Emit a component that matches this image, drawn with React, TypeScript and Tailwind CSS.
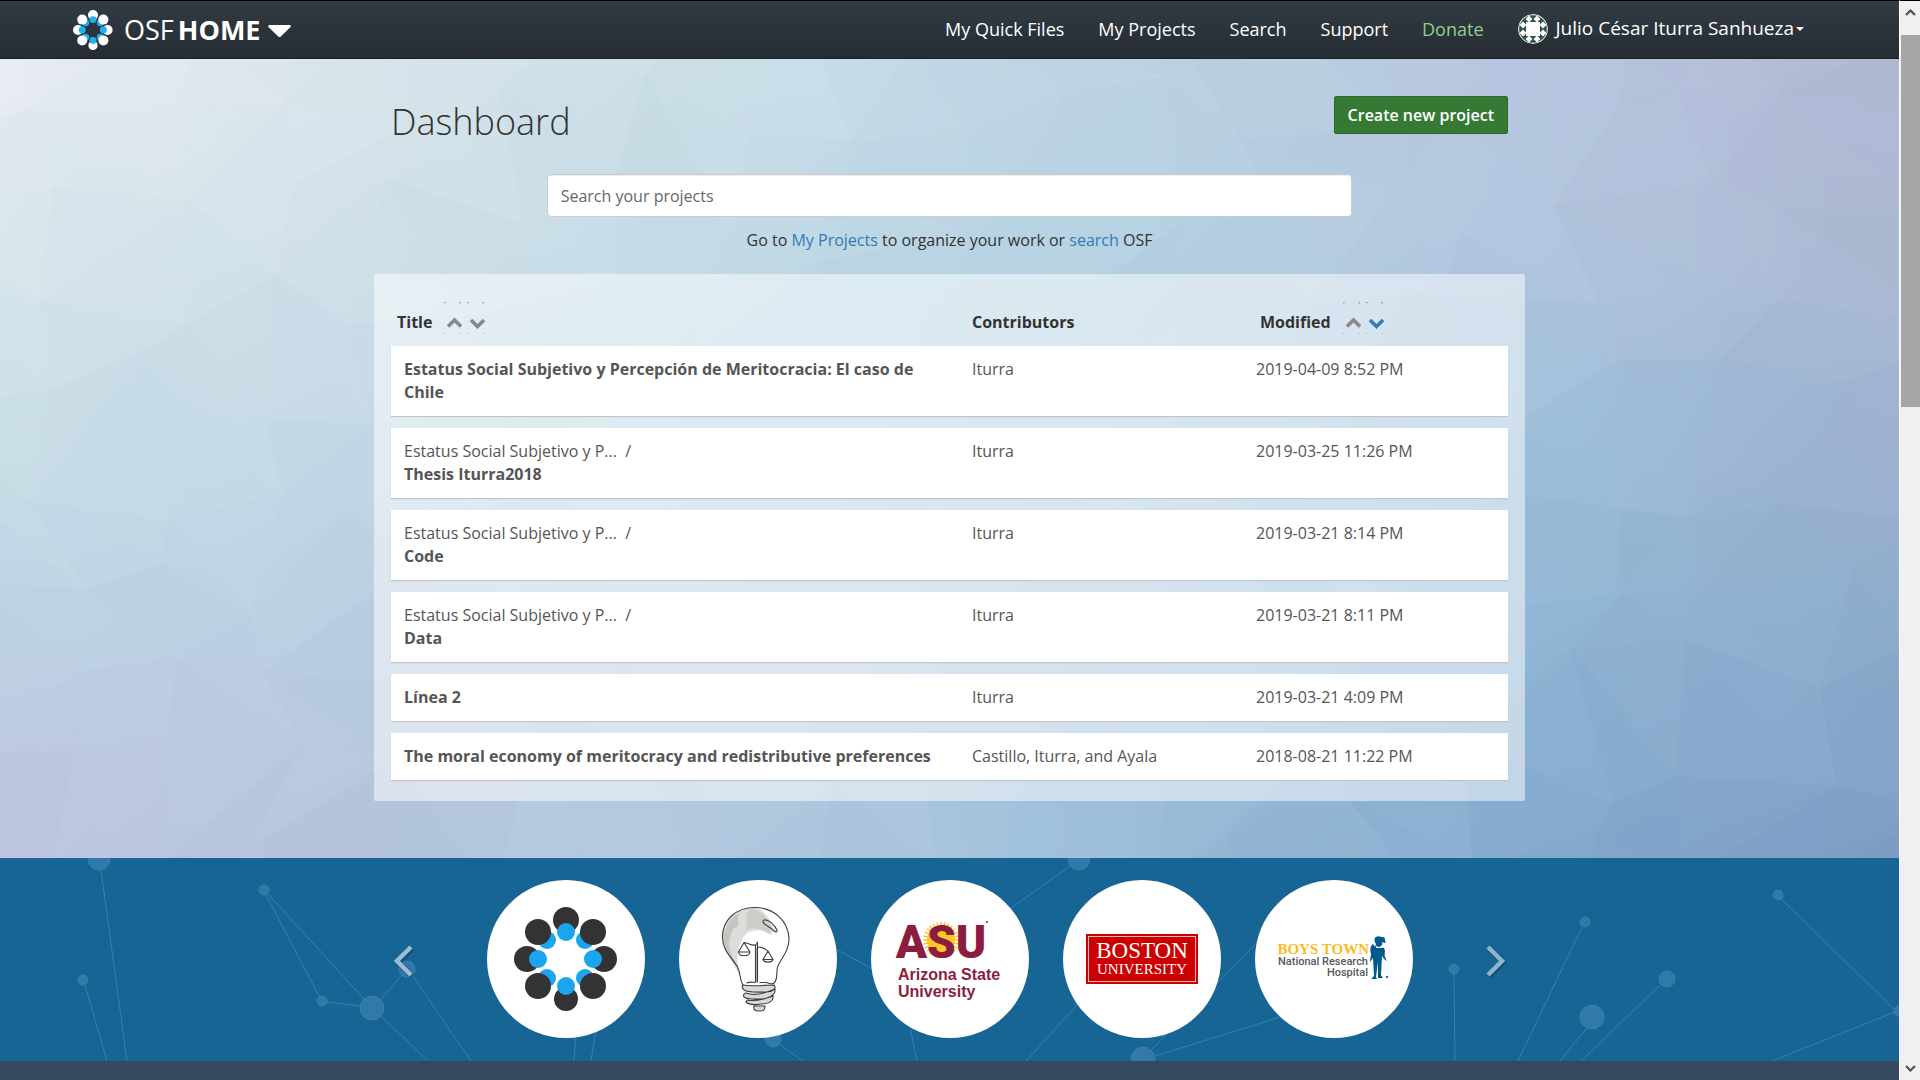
import React from "react";

type Rgb = [number, number, number];

const hex = (s: string): Rgb => [
  parseInt(s.slice(0, 2), 16),
  parseInt(s.slice(2, 4), 16),
  parseInt(s.slice(4, 6), 16),
];

// Colours the backdrop blends between, from top-left to bottom-right.
const PALETTE: Rgb[][] = [
  ["e8ecf2", "dae5ec", "cadee8", "bdd2e2", "b7c6e0", "b2b8d4"],
  ["d7e5eb", "cfdfe8", "c0d9e5", "b3d0e2", "b3c6df", "abb9d3"],
  ["c9dde7", "c2d8e6", "bbd3e3", "afcde0", "9bbed8", "9db1cf"],
  ["bed0e4", "bacce2", "b9cce0", "a8c6de", "90b6d5", "8caacb"],
  ["bdc3de", "b5c5de", "afc8df", "9cbcd9", "83a9cd", "7c9bc3"],
].map((row) => row.map(hex));

const BG_W = 1900;
const BG_H = 800;

function colourAt(x: number, y: number): Rgb {
  const u = Math.min(4.999, Math.max(0, (x / BG_W) * 5));
  const v = Math.min(3.999, Math.max(0, (y / BG_H) * 4));
  const i = Math.floor(u);
  const j = Math.floor(v);
  const fu = u - i;
  const fv = v - j;
  return [0, 1, 2].map((k) => {
    const top = PALETTE[j][i][k] * (1 - fu) + PALETTE[j][i + 1][k] * fu;
    const bottom = PALETTE[j + 1][i][k] * (1 - fu) + PALETTE[j + 1][i + 1][k] * fu;
    return top * (1 - fv) + bottom * fv;
  }) as Rgb;
}

function noise(a: number, b: number) {
  const s = Math.sin(a * 127.1 + b * 311.7) * 43758.5453;
  return s - Math.floor(s);
}

const CELL_X = 110;
const CELL_Y = 95;

function buildFacets() {
  const vertex = (i: number, j: number): [number, number] => [
    Math.round((i - 0.5 + (noise(i, j) - 0.5) * 0.75) * CELL_X),
    Math.round((j - 0.5 + (noise(j + 40, i) - 0.5) * 0.75) * CELL_Y),
  ];
  const facets: { points: string; fill: string }[] = [];
  for (let j = -2; j < 11; j++) {
    for (let i = -2; i < 20; i++) {
      const a = vertex(i, j);
      const b = vertex(i + 1, j);
      const c = vertex(i + 1, j + 1);
      const d = vertex(i, j + 1);
      const tris = noise(i, j + 90) > 0.5 ? [[a, b, c], [a, c, d]] : [[a, b, d], [b, c, d]];
      tris.forEach((t, n) => {
        const cx = (t[0][0] + t[1][0] + t[2][0]) / 3;
        const cy = (t[0][1] + t[1][1] + t[2][1]) / 3;
        const shift = (noise(i + n * 7, j + 13) - 0.5) * 4;
        const rgb = colourAt(cx, cy).map((v) => Math.round(v + shift));
        facets.push({
          points: t.map((p) => p.join(",")).join(" "),
          fill: `rgb(${rgb.join(",")})`,
        });
      });
    }
  }
  return facets;
}

const FACETS = buildFacets();

function Backdrop() {
  const facets = FACETS.map((f, n) => (
    <polygon key={n} points={f.points} fill={f.fill} stroke={f.fill} strokeWidth="1" />
  ));
  return (
    <svg
      aria-hidden="true"
      className="absolute inset-0 h-full w-full"
      viewBox={`0 0 ${BG_W} ${BG_H}`}
      preserveAspectRatio="none"
    >
      <defs>
        <filter id="backdrop-blend" x="-5%" y="-5%" width="110%" height="110%" colorInterpolationFilters="sRGB">
          <feGaussianBlur stdDeviation="36" />
        </filter>
      </defs>
      <g filter="url(#backdrop-blend)">{facets}</g>
      <g opacity="0.65">{facets}</g>
    </svg>
  );
}

function OsfMark({ dark, blue, className }: { dark: string; blue: string; className: string }) {
  const corners = [[106, 52], [106, 106], [51, 106], [51, 52]];
  const innerCorners = [[98, 60], [98, 98], [60, 98], [60, 60]];
  const sides = [[79, 40, 13], [117, 79, 13], [79, 119, 12], [40, 79, 13]];
  const innerSides = [[79, 52], [106, 79], [79, 106], [51, 79]];
  return (
    <svg className={className} viewBox="27 27 104 104" aria-hidden="true">
      {sides.map(([x, y, r]) => <circle key={`${x}-${y}`} cx={x} cy={y} r={r} fill={dark} />)}
      {innerCorners.map(([x, y]) => <circle key={`${x}-${y}`} cx={x} cy={y} r="9" fill={blue} />)}
      {innerSides.map(([x, y]) => <circle key={`${x}-${y}`} cx={x} cy={y} r="9" fill={blue} />)}
      {corners.map(([x, y]) => <circle key={`${x}-${y}`} cx={x} cy={y} r="13" fill={dark} />)}
    </svg>
  );
}

function Avatar() {
  const dots = [
    [11, 5], [19, 5], [11, 25], [19, 25], [5, 11], [5, 19], [25, 11], [25, 19],
  ];
  return (
    <svg className="h-[30px] w-[30px]" viewBox="0 0 30 30" aria-hidden="true">
      <defs>
        <clipPath id="avatar-clip"><circle cx="15" cy="15" r="15" /></clipPath>
      </defs>
      <g clipPath="url(#avatar-clip)">
        <rect width="30" height="30" fill="#35504d" />
        {dots.map(([x, y]) => (
          <path key={`${x}-${y}`} d={`M${x} ${y - 3.4}L${x + 3.4} ${y}L${x} ${y + 3.4}L${x - 3.4} ${y}Z`} fill="#fff" />
        ))}
        <rect x="8" y="8" width="14" height="14" fill="#fff" />
        <circle cx="15" cy="15" r="14.400" fill="none" stroke="#dfe5e5" strokeWidth="1.200" />
      </g>
    </svg>
  );
}

function Header() {
  return (
    <header className="flex h-[59px] items-center justify-between border-t border-b border-t-black border-b-[#1b2127] bg-linear-to-b from-[#333b43] to-[#252c33] pr-[95px] pl-[73px] text-white">
      <div className="flex items-center">
        <a href="#home" className="flex items-center gap-[11px]">
          <OsfMark dark="#ffffff" blue="#1fb0ee" className="h-10 w-10" />
          <span className="text-[27px] leading-9">
            OSF<span className="pl-1 font-bold">HOME</span>
          </span>
        </a>
        <button type="button" aria-label="Switch OSF service" className="ml-2 pt-1">
          <svg className="h-[13px] w-[23px]" viewBox="0 0 23 13" aria-hidden="true">
            <path d="M1.2 0h20.600q1.700.8.500 2.200l-9.500 9.300q-1.300 1.200-2.600 0L.7 2.200Q-.5.800 1.200 0Z" fill="#fff" />
          </svg>
        </button>
      </div>
      <nav className="flex items-center gap-[34px] pb-px text-lg">
        <a href="#quickfiles">My Quick Files</a>
        <a href="#projects">My Projects</a>
        <a href="#search">Search</a>
        <a href="#support">Support</a>
        <a href="#donate" className="text-[#8fd08f]">Donate</a>
        <button type="button" className="flex items-center gap-2 text-[19px]">
          <Avatar />
          <span className="flex items-center gap-[2px]">
            Julio César Iturra Sanhueza
            <svg className="h-1 w-2" viewBox="0 0 8 4" aria-hidden="true"><path d="M0 0h8L4 4Z" fill="#fff" /></svg>
          </span>
        </button>
      </nav>
    </header>
  );
}

function SortButton({ label, up, active }: { label: string; up?: boolean; active?: boolean }) {
  return (
    <button type="button" aria-label={label} className={active ? "text-[#337ab7]" : "text-[#888888]"}>
      <svg className="h-8 w-[19px]" viewBox="0 0 19 32" aria-hidden="true">
        <path
          d={up ? "M4 24.500L10.500 18L17 24.500" : "M4 18L10.500 24.500L17 18"}
          fill="none"
          stroke="currentColor"
          strokeWidth="3.600"
        />
        <path d="M0 .5h2M0 1v1M15 .5h2M16.500 1v1M0 31.500h1M16 31.500h1" stroke="#8b98a5" strokeOpacity=".7" fill="none" />
      </svg>
    </button>
  );
}

function SortGroup({ column, descActive }: { column: string; descActive?: boolean }) {
  return (
    <span className="ml-3 flex gap-1">
      <SortButton label={`Sort by ${column}, ascending`} up />
      <SortButton label={`Sort by ${column}, descending`} active={descActive} />
    </span>
  );
}

const PROJECTS = [
  { title: "Estatus Social Subjetivo y Percepción de Meritocracia: El caso de Chile", who: "Iturra", when: "2019-04-09 8:52 PM" },
  { parent: true, title: "Thesis Iturra2018", who: "Iturra", when: "2019-03-25 11:26 PM" },
  { parent: true, title: "Code", who: "Iturra", when: "2019-03-21 8:14 PM" },
  { parent: true, title: "Data", who: "Iturra", when: "2019-03-21 8:11 PM" },
  { title: "Línea 2", who: "Iturra", when: "2019-03-21 4:09 PM" },
  { title: "The moral economy of meritocracy and redistributive preferences", who: "Castillo, Iturra, and Ayala", when: "2018-08-21 11:22 PM" },
];

function ProjectTable() {
  return (
    <div className="rounded-xs bg-white/50 px-[17px] pt-[13px] pb-[9px]">
      <table className="w-full table-fixed border-separate border-spacing-x-0 border-spacing-y-3 text-left leading-[23px]">
        <colgroup>
          <col className="w-[568px]" />
          <col className="w-[284px]" />
          <col />
        </colgroup>
        <thead>
          <tr className="h-[35px] align-bottom font-bold">
            <th className="p-0 pl-[6px]">
              <div className="flex h-[35px] items-end">Title<SortGroup column="title" /></div>
            </th>
            <th className="p-0 pl-[13px]">Contributors</th>
            <th className="p-0 pl-[17px]">
              <div className="flex h-[35px] items-end">Modified<SortGroup column="date" descActive /></div>
            </th>
          </tr>
        </thead>
        <tbody className="text-[#555555]">
          {PROJECTS.map((p) => (
            <tr key={p.title} className="bg-white align-top shadow-[0_1px_1px_#c4c4c4]">
              <td className="py-3 pr-6 pl-[13px]">
                {p.parent && <div>Estatus Social Subjetivo y P...&nbsp; /</div>}
                <a href="#project" className="font-bold">{p.title}</a>
              </td>
              <td className="py-3 pl-[13px]">{p.who}</td>
              <td className="py-3 pl-[13px]">{p.when}</td>
            </tr>
          ))}
        </tbody>
      </table>
    </div>
  );
}

function Dashboard() {
  return (
    <section className="relative overflow-hidden bg-[#b8cfe1] pb-[57px]">
      <Backdrop />
      <div className="relative mx-auto w-full max-w-[1151px]">
        <div className="flex items-start justify-between px-[17px] pt-[37px]">
          <h1 className="pt-1 text-4xl leading-[44px] font-light">Dashboard</h1>
          <button type="button" className="h-[38px] rounded-xs border border-[#2d672d] bg-[#357935] px-[13px] font-semibold text-white">
            Create new project
          </button>
        </div>
        <div className="mx-auto mt-[30px] w-[70%]">
          <input
            type="text"
            aria-label="Search your projects"
            placeholder="Search your projects"
            className="h-[43px] w-full rounded-sm border border-[#cccccc] bg-white px-[13px] shadow-[inset_0_1px_1px_rgba(0,0,0,0.075)] placeholder:text-[#666666]"
          />
        </div>
        <p className="mt-3 mb-[22px] text-center leading-[23px]">
          Go to <a href="#projects" className="text-[#337ab7]">My Projects</a> to organize your work or{" "}
          <a href="#search" className="text-[#337ab7]">search</a> OSF
        </p>
        <ProjectTable />
      </div>
    </section>
  );
}

function Network() {
  const nodes = [
    [99, 1, 11], [264, 32, 5], [83, 122, 5], [322, 143, 5], [372, 150, 12], [407, 111, 8],
    [773, 181, 8], [1079, 1, 11], [1143, 201, 12], [1454, 111, 5], [1585, 64, 5],
    [1667, 121, 8], [1592, 159, 12], [1778, 37, 5], [1899, 153, 5],
  ];
  return (
    <svg
      aria-hidden="true"
      className="absolute inset-0 h-full w-full"
      viewBox="0 0 1899 203"
      preserveAspectRatio="xMidYMid slice"
    >
      <path
        d="M101 12L127 203M266 37L319 138M268 36L364 141M327 144L360 148M381 141L402 117M381 158L428 203M412 117L471 203M85 127L107 203M779 186L803 203M576 175L574 203M597 165L591 203M830 88L880 115M1070 8L1000 58M908 160L917 203M1026 203L1085 138M1151 192L1255 87M1155 198L1290 156M1454 116L1455 203M1582 69L1518 203M1660 127L1581 203M1587 170L1560 203M1781 41L1894 151M1895 154L1772 203"
        stroke="#4089b8"
        strokeOpacity=".75"
        fill="none"
      />
      {nodes.map(([x, y, r]) => (
        <circle key={`${x}-${y}`} cx={x} cy={y} r={r} fill="#3079a8" stroke="#3b83b0" strokeWidth=".8" />
      ))}
    </svg>
  );
}

function BulbLogo() {
  return (
    <svg className="h-full w-full" viewBox="0 0 158 158" aria-hidden="true">
      <path d="M76 28C56 28 44 42 44 58C45 72 54 82 60 95C58 84 58 74 60 68C62 60 66 52 73 51C81 49 88 51 92 55C96 51 92 40 86 34C83 30 80 28 76 28Z" fill="#dcddd9" />
      <path d="M46 50C48 44 53 36 61 33C56 40 62 44 58 47C52 48 52 55 50 62C49 70 55 78 58 88C48 74 42 66 46 50Z" fill="#c3c5c0" />
      <path d="M70 30C76 28 84 32 87 38C92 42 93 50 90 54C83 50 76 46 66 50C70 42 64 38 70 30Z" fill="#cccec9" />
      <g fill="none" stroke="#3c3c3c" strokeWidth="1.100" strokeLinejoin="round" strokeLinecap="round">
        <path d="M64 105C60 99 62 94 59 88C54 78 44 72 43.500 58C43 40 57 27.500 76 27.500C95 27.500 109 41 110 58C110.500 71 102 78 98.500 87C97 94 99 100 95 103C93 105 90 103 87 102.500H81" />
        <path d="M85 40C89 39 95 44 98 50C98.500 53 96 52 94 50C90 46 85 45 84 42C84 41 84 40 85 40Z" />
        <path d="M76.500 102V66C76 64 78 65 78.500 62V102M76.500 65C72 66 70 63 65 62.500L59.500 72H71L65 62.500M79 67C84 67 86 69 89 71L84 79.500H94L89 71M59.500 72C60 77 70 77 71 72M84 79.500C85 83 93 83 94 79.500M68 103C71 101 75 103 77 102" />
        <path d="M64 105C74 107 86 105 95 105C98 108 94 112 87 112C79 112 70 113 65 110C63 108 63 106 64 105ZM67 113C75 116 87 113 96 109C97 114 92 118 83 119C76 119 69 120 65 117C64 115 65 113 67 113ZM68 120C77 122 86 119 94 116C95 121 90 124 82 124C76 125 70 125 67 122ZM75 126H86C86 131 84 131 80 131C76 131 74 130 75 126Z" fill="#d8d9d5" />
      </g>
      <path d="M77 68h1v34h-1z" fill="#aaa" />
    </svg>
  );
}

function AsuLogo() {
  const rays = Array.from({ length: 28 }, (_, n) => (n * 360) / 28);
  return (
    <svg className="h-full w-full" viewBox="0 0 158 158" role="img" aria-label="Arizona State University">
      <g stroke="#ffc627" strokeWidth="1.500">
        {rays.map((a) => <path key={a} d="M70 60V42" transform={`rotate(${a} 70 60)`} />)}
      </g>
      <circle cx="70" cy="60" r="14" fill="#ffc627" />
      <g fill="#8c1d40" fontFamily="Liberation Sans, sans-serif" fontWeight="bold">
        <text x="70" y="78" fontSize="46" textAnchor="middle" fontWeight="900" fontFamily="Roboto, sans-serif">ASU</text>
        <text x="27" y="100" fontSize="16">Arizona State</text>
        <text x="27" y="117" fontSize="16">University</text>
        <circle cx="116" cy="42" r="1" />
      </g>
    </svg>
  );
}

function BostonLogo() {
  return (
    <svg className="h-full w-full" viewBox="0 0 158 158" role="img" aria-label="Boston University">
      <rect x="23" y="54" width="112" height="50" fill="#cc0000" />
      <rect x="25.500" y="56.500" width="107" height="45" fill="none" stroke="#f3b8b8" />
      <g fill="#ffffff" fontFamily="Liberation Serif, serif" textAnchor="middle">
        <text x="79" y="78" fontSize="23">BOSTON</text>
        <text x="79" y="94" fontSize="15">UNIVERSITY</text>
      </g>
    </svg>
  );
}

function BoysTownLogo() {
  return (
    <svg className="h-full w-full" viewBox="0 0 158 158" role="img" aria-label="Boys Town National Research Hospital">
      <text x="114" y="74" fontSize="15" textAnchor="end" fill="#fdbb1f" fontFamily="Liberation Serif, serif" fontWeight="bold">BOYS TOWN</text>
      <g fill="#58595b" fontFamily="Roboto, sans-serif" fontWeight="500" textAnchor="end">
        <text x="113" y="85" fontSize="11">National Research</text>
        <text x="113" y="96" fontSize="11">Hospital</text>
      </g>
      <path d="M121 57C124 55 127 58 129 57C131 59 129 61 131 62L130 63L127 62C128 65 126 66 125 67L129 68C131 71 129 74 130 77L132 81L129 79L127 76L126 95L128 98H123L123 82L121 97L122 99H116L119 96L118 78L115 82L116 74C115 70 115 66 118 64L120 67L121 64C119 61 119 58 121 57Z" fill="#005b8c" />
      <path d="M121 66L124 67L127 66V68H121Z" fill="#ffffff" />
      <circle cx="132" cy="97" r="1.300" fill="#3b7ca3" />
    </svg>
  );
}

function Carousel() {
  const arrow = "drop-shadow-[1px_1px_1px_rgba(0,0,0,0.4)] h-8 w-[19px]";
  return (
    <section className="relative overflow-hidden bg-[#176595]">
      <Network />
      <div className="relative mx-auto flex max-w-[1151px] items-center justify-between px-5 pt-[22px] pb-[23px]">
        <button type="button" aria-label="Previous" className="pt-1">
          <svg className={arrow} viewBox="0 0 19 32" aria-hidden="true">
            <path d="M17 2L3 16L17 30" fill="none" stroke="#9bbcd3" strokeWidth="4.500" />
          </svg>
        </button>
        <ul className="flex gap-[34px]">
          <li className="flex h-[158px] w-[158px] items-center justify-center rounded-full bg-white">
            <OsfMark dark="#333333" blue="#1aa5ee" className="h-[104px] w-[104px]" />
          </li>
          <li className="h-[158px] w-[158px] rounded-full bg-white"><BulbLogo /></li>
          <li className="h-[158px] w-[158px] rounded-full bg-white"><AsuLogo /></li>
          <li className="h-[158px] w-[158px] rounded-full bg-white"><BostonLogo /></li>
          <li className="h-[158px] w-[158px] rounded-full bg-white"><BoysTownLogo /></li>
        </ul>
        <button type="button" aria-label="Next" className="pt-1">
          <svg className={arrow} viewBox="0 0 19 32" aria-hidden="true">
            <path d="M2 2L16 16L2 30" fill="none" stroke="#8fb4ce" strokeWidth="4.500" />
          </svg>
        </button>
      </div>
    </section>
  );
}

function ScrollBar() {
  return (
    <aside className="flex w-[21px] shrink-0 flex-col items-center border-t border-l border-t-black border-l-white bg-[#f0f0f0]">
      <svg className="my-[7px] h-5 w-[11px]" viewBox="0 0 11 20" aria-hidden="true">
        <path d="M1 7L5.500 2.500L10 7" fill="none" stroke="#505050" strokeWidth="2.200" />
      </svg>
      <div className="h-[372px] w-[19px] bg-[#a6a6a6]" />
      <svg className="mt-auto mb-1 h-[14px] w-[11px]" viewBox="0 0 11 14" aria-hidden="true">
        <path d="M1 4L5.500 8.500L10 4" fill="none" stroke="#505050" strokeWidth="2.200" />
      </svg>
    </aside>
  );
}

export default function App() {
  return (
    <div className="flex min-h-screen bg-[#34495e] font-['Open_Sans',sans-serif] text-base text-[#333333]">
      <div className="min-w-0 flex-1">
        <Header />
        <main>
          <Dashboard />
          <Carousel />
        </main>
      </div>
      <ScrollBar />
    </div>
  );
}
